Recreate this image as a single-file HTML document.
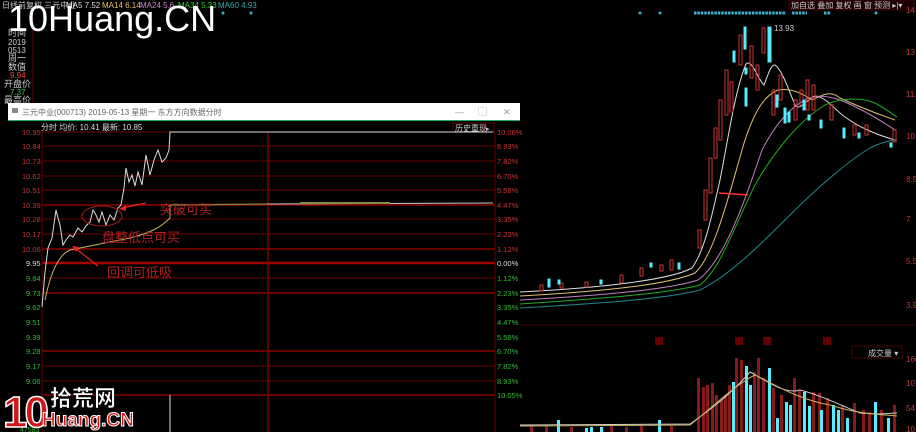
<!DOCTYPE html>
<html><head><meta charset="utf-8">
<style>
html,body{margin:0;padding:0;background:#000;width:916px;height:432px;overflow:hidden;font-family:"Liberation Sans","Noto Sans CJK SC",sans-serif;}
svg{position:absolute;left:0;top:0}
text{font-family:"Liberation Sans","Noto Sans CJK SC",sans-serif}
</style></head><body>
<svg width="916" height="432" viewBox="0 0 916 432">
<!-- top legend -->
<text x="2" y="8" font-size="8" fill="#ccc">日线前复权 三元中业</text>
<text x="66" y="8" font-size="8" fill="#ddd">MA5 7.52</text>
<text x="102" y="8" font-size="8" fill="#e6c060">MA14 6.14</text>
<text x="140" y="8" font-size="8" fill="#d080d0">MA24 5.6</text>
<text x="178" y="8" font-size="8" fill="#3c3">MA34 5.33</text>
<text x="218" y="8" font-size="8" fill="#3aa">MA60 4.93</text>
<g fill="#3ab0d0">
<circle cx="223" cy="13" r="1.5"/><circle cx="251" cy="13" r="1.5"/><circle cx="640" cy="13" r="1.5"/><circle cx="660" cy="13" r="1.5"/>
<circle cx="876" cy="13" r="1.5"/>
</g>
<line x1="694" y1="13" x2="786" y2="13" stroke="#3ab0d0" stroke-width="3" stroke-dasharray="2.5 0.9"/>
<line x1="792" y1="13" x2="807" y2="13" stroke="#3ab0d0" stroke-width="3" stroke-dasharray="2.5 0.9"/>
<line x1="824" y1="13" x2="831" y2="13" stroke="#3ab0d0" stroke-width="3" stroke-dasharray="2.5 0.9"/>
<!-- toolbar -->
<rect x="789" y="0" width="125" height="10" fill="#1a0000" stroke="#600" stroke-width="0.6"/>
<text x="791" y="8" font-size="8" fill="#ccc">加自选 叠加 复权 画 窗 预测 ▸|▾</text>
<!-- left panel -->
<line x1="33" y1="18" x2="33" y2="432" stroke="#600" stroke-width="1"/>
<text x="8" y="36" font-size="9" fill="#ccc">时间</text>
<text x="8" y="45" font-size="8" fill="#ccc">2019</text>
<text x="8" y="53" font-size="8" fill="#ccc">0513</text>
<text x="8" y="61" font-size="9" fill="#ccc">周一</text>
<text x="8" y="70" font-size="9" fill="#ccc">数值</text>
<text x="10" y="78" font-size="8" fill="#f44">9.94</text>
<text x="4" y="87" font-size="9" fill="#ccc">开盘价</text>
<text x="10" y="95" font-size="8" fill="#4c4">7.37</text>
<text x="4" y="103" font-size="9" fill="#ccc">最高价</text>
<!-- K-line right: MA lines -->
<g stroke-width="1" fill="none">
<path d="M520,292 C600,288 670,280 692,268 C705,250 712,215 720,180 C728,140 735,90 746,64 C752,58 758,80 764,85 C768,75 771,64 775,65 C782,70 788,88 795,105 C800,112 808,98 815,96 C825,96 835,110 845,117 C860,128 880,136 895,140" stroke="#ddd"/>
<path d="M520,296 C610,291 670,284 695,273 C715,255 730,190 745,140 C755,110 765,95 778,90 C790,88 800,92 812,100 C822,95 830,90 840,98 C855,105 875,113 895,120" stroke="#e0c070"/>
<path d="M520,300 C610,295 670,289 698,280 C725,260 745,200 762,150 C775,125 790,108 805,100 C815,95 825,95 840,100 C860,108 880,120 895,130" stroke="#c080c0"/>
<path d="M520,304 C610,298 670,293 700,285 C720,270 735,225 755,185 C775,150 800,120 825,105 C840,98 860,97 875,103 C885,108 893,115 897,117" stroke="#2a2"/>
<path d="M520,308 C610,303 670,298 700,290 C730,275 760,245 790,215 C820,185 850,160 870,148 C882,142 892,140 897,140" stroke="#288"/>
</g>
<g stroke-width="1">
<g stroke="#c33" fill="none">
<rect x="540" y="285" width="3" height="6"/><rect x="560" y="283" width="3" height="5"/><rect x="585" y="282" width="3" height="5"/><rect x="620" y="275" width="3" height="8"/><rect x="640" y="268" width="3" height="8"/><rect x="660" y="265" width="3" height="6"/><rect x="670" y="260" width="3" height="10"/>
<rect x="698" y="230" width="3" height="18"/><rect x="704" y="190" width="3" height="30"/><rect x="709" y="158" width="3" height="35"/><rect x="714" y="128" width="3" height="30"/><rect x="719" y="100" width="3" height="40"/><rect x="725" y="70" width="3" height="45"/><rect x="730" y="82" width="3" height="30"/>
<rect x="739" y="35" width="3" height="30"/><rect x="750" y="46" width="3" height="32"/><rect x="756" y="65" width="3" height="25"/><rect x="762" y="28" width="3" height="25"/><rect x="772" y="90" width="3" height="25"/><rect x="779" y="75" width="3" height="25"/>
<rect x="794" y="100" width="3" height="20"/><rect x="800" y="90" width="3" height="15"/><rect x="806" y="80" width="3" height="30"/><rect x="812" y="85" width="3" height="25"/><rect x="830" y="105" width="3" height="15"/><rect x="853" y="125" width="3" height="10"/><rect x="865" y="125" width="3" height="10"/><rect x="893" y="130" width="3" height="12"/>
</g>
<g fill="#5ef" stroke="#5ef">
<rect x="548" y="279" width="2" height="8"/><rect x="558" y="280" width="2" height="4"/><rect x="600" y="280" width="2" height="4"/><rect x="650" y="263" width="2" height="4"/><rect x="678" y="263" width="2" height="6"/>
<rect x="733" y="51" width="2" height="11"/><rect x="744" y="27" width="2" height="22"/><rect x="768" y="27" width="3" height="35"/><rect x="745" y="88" width="2" height="18"/><rect x="745" y="68" width="2" height="6"/>
<rect x="776" y="95" width="2" height="12"/><rect x="784" y="108" width="2" height="15"/><rect x="788" y="112" width="2" height="10"/><rect x="803" y="100" width="2" height="10"/><rect x="808" y="115" width="2" height="5"/><rect x="820" y="120" width="2" height="8"/><rect x="843" y="128" width="2" height="10"/><rect x="858" y="133" width="2" height="5"/><rect x="890" y="143" width="2" height="4"/>
</g>
</g>
<text x="774" y="31" font-size="8" fill="#ccc">13.93</text>
<line x1="719" y1="193" x2="748" y2="195" stroke="#f33" stroke-width="1.5"/>
<!-- right axis -->
<g font-size="8" fill="#c33">
<text x="906" y="13">14</text><text x="906" y="55">13</text><text x="906" y="97">11.5</text><text x="906" y="139">10</text><text x="906" y="182">8.5</text><text x="906" y="222">7</text><text x="906" y="264">5.5</text><text x="906" y="308">3.9</text>
<text x="906" y="362">160</text><text x="906" y="386">107</text><text x="906" y="411">54</text><text x="906" y="432">10</text>
</g>
<line x1="520" y1="325" x2="916" y2="325" stroke="#400" stroke-width="1"/>
<g font-size="8" fill="#fff"><rect x="655" y="337" width="8" height="8" fill="#600"/><rect x="735" y="337" width="8" height="8" fill="#600"/><rect x="763" y="337" width="8" height="8" fill="#600"/><rect x="823" y="337" width="8" height="8" fill="#600"/></g>
<rect x="852" y="346" width="50" height="12" fill="none" stroke="#400"/>
<text x="868" y="356" font-size="8" fill="#ccc">成交量 ▾</text>
<!-- volume -->
<g fill="#8a1a1a">
<rect x="697" y="378" width="3" height="54"/><rect x="702" y="387" width="3" height="45"/><rect x="706" y="385" width="3" height="47"/><rect x="711" y="383" width="3" height="49"/><rect x="715" y="395" width="3" height="37"/><rect x="720" y="400" width="3" height="32"/><rect x="724" y="395" width="3" height="37"/><rect x="728" y="385" width="3" height="47"/>
<rect x="735" y="358" width="3" height="74"/><rect x="740" y="360" width="3" height="72"/><rect x="753" y="372" width="3" height="60"/><rect x="757" y="358" width="3" height="74"/><rect x="762" y="378" width="3" height="54"/><rect x="772" y="388" width="3" height="44"/><rect x="780" y="395" width="3" height="37"/>
<rect x="793" y="378" width="3" height="54"/><rect x="798" y="390" width="3" height="42"/><rect x="812" y="392" width="3" height="40"/><rect x="818" y="393" width="3" height="39"/><rect x="826" y="398" width="3" height="34"/><rect x="841" y="405" width="3" height="27"/><rect x="853" y="403" width="3" height="29"/><rect x="862" y="410" width="3" height="22"/><rect x="868" y="412" width="3" height="20"/><rect x="880" y="410" width="3" height="22"/><rect x="893" y="405" width="3" height="27"/>
<rect x="530" y="426" width="3" height="6"/><rect x="545" y="426" width="3" height="6"/><rect x="570" y="427" width="3" height="5"/><rect x="610" y="426" width="3" height="6"/><rect x="625" y="427" width="3" height="5"/><rect x="640" y="426" width="3" height="6"/><rect x="670" y="426" width="3" height="6"/>
</g>
<g fill="#5ef">
<rect x="732" y="382" width="3" height="50"/><rect x="745" y="366" width="3" height="66"/><rect x="749" y="385" width="3" height="47"/><rect x="768" y="368" width="3" height="64"/><rect x="776" y="418" width="3" height="14"/><rect x="785" y="402" width="3" height="30"/><rect x="789" y="405" width="3" height="27"/><rect x="803" y="392" width="3" height="40"/><rect x="808" y="406" width="3" height="26"/><rect x="820" y="410" width="3" height="22"/><rect x="832" y="405" width="3" height="27"/><rect x="837" y="410" width="3" height="22"/><rect x="846" y="418" width="3" height="14"/><rect x="874" y="402" width="3" height="30"/><rect x="887" y="418" width="3" height="14"/><rect x="557" y="420" width="3" height="12"/><rect x="658" y="420" width="3" height="12"/><rect x="590" y="427" width="3" height="5"/><rect x="585" y="428" width="3" height="4"/><rect x="600" y="427" width="3" height="5"/>
</g>
<path d="M520,425 L690,424 C710,410 730,395 750,372 C765,380 785,395 800,390 C820,395 840,405 860,413 C880,415 890,413 897,413" fill="none" stroke="#ccc" stroke-width="1"/>
<path d="M520,426 L690,425 C715,405 735,385 755,375 C775,385 800,400 830,405 C860,415 890,415 897,416" fill="none" stroke="#c9b060" stroke-width="1"/>

<!-- popup window -->
<rect x="8" y="103" width="512" height="329" fill="#000"/>
<rect x="8" y="103" width="512" height="17" fill="#fff"/>
<rect x="12" y="108" width="6" height="5" fill="#888"/>
<text x="22" y="115" font-size="8" fill="#666">三元中业(000713) 2019-05-13 星期一      东方方向数据分时</text>
<text x="455" y="115" font-size="9" fill="#999">—</text><text x="478" y="115" font-size="9" fill="#999">▢</text><text x="503" y="115" font-size="9" fill="#999">✕</text>
<rect x="8" y="120" width="512" height="1" fill="#2a6"/>
<text x="41" y="130" font-size="8" fill="#ddd">分时 均价: 10.41 最新: 10.85</text>
<rect x="453" y="123" width="30" height="9" fill="none" stroke="#600"/>
<text x="455" y="131" font-size="8" fill="#ccc">历史重现</text>
<rect x="485" y="123" width="9" height="9" fill="none" stroke="#600"/><text x="486" y="131" font-size="7" fill="#ccc">▸</text>
<!-- grid -->
<g stroke="#6a0000" stroke-width="1">
<line x1="42" y1="132" x2="495" y2="132"/><line x1="42" y1="146" x2="495" y2="146"/><line x1="42" y1="161" x2="495" y2="161"/><line x1="42" y1="176" x2="495" y2="176"/><line x1="42" y1="190" x2="495" y2="190"/><line x1="42" y1="219" x2="495" y2="219"/><line x1="42" y1="234" x2="495" y2="234"/><line x1="42" y1="278" x2="495" y2="278"/><line x1="42" y1="366" x2="495" y2="366"/><line x1="42" y1="381" x2="495" y2="381"/>
</g>
<g stroke="#8a0000" stroke-width="1.6">
<line x1="42" y1="205" x2="495" y2="205"/><line x1="42" y1="249" x2="495" y2="249"/><line x1="42" y1="293" x2="495" y2="293"/><line x1="42" y1="351" x2="495" y2="351"/><line x1="42" y1="395" x2="495" y2="395"/>
</g>
<line x1="42" y1="263" x2="495" y2="263" stroke="#a00000" stroke-width="2.5"/>
<line x1="268" y1="132" x2="268" y2="432" stroke="#7a0000" stroke-width="1.5"/>
<line x1="42" y1="132" x2="42" y2="432" stroke="#600"/>
<line x1="495" y1="132" x2="495" y2="432" stroke="#600"/>
<g font-size="7.5" fill="#c33">
<text x="22" y="135">10.95</text><text x="22" y="149">10.84</text><text x="22" y="164">10.73</text><text x="22" y="179">10.62</text><text x="22" y="193">10.51</text><text x="22" y="208">10.39</text><text x="22" y="222">10.28</text><text x="22" y="237">10.17</text><text x="22" y="252">10.06</text>
<text x="497" y="135">10.06%</text><text x="497" y="149">8.93%</text><text x="497" y="164">7.82%</text><text x="497" y="179">6.70%</text><text x="497" y="193">5.58%</text><text x="497" y="208">4.47%</text><text x="497" y="222">3.35%</text><text x="497" y="237">2.23%</text><text x="497" y="252">1.12%</text>
</g>
<text x="26" y="266" font-size="7.5" fill="#ddd">9.95</text><text x="497" y="266" font-size="7.5" fill="#ddd">0.00%</text>
<g font-size="7.5" fill="#3b3">
<text x="26" y="281">9.84</text><text x="26" y="296">9.73</text><text x="26" y="310">9.62</text><text x="26" y="325">9.51</text><text x="26" y="340">9.39</text><text x="26" y="354">9.28</text><text x="26" y="369">9.17</text><text x="26" y="384">9.06</text>
<text x="497" y="281">1.12%</text><text x="497" y="296">2.23%</text><text x="497" y="310">3.35%</text><text x="497" y="325">4.47%</text><text x="497" y="340">5.58%</text><text x="497" y="354">6.70%</text><text x="497" y="369">7.82%</text><text x="497" y="384">8.93%</text><text x="497" y="398">10.05%</text>
</g>
<!-- price line -->
<polyline fill="none" stroke="#ddd" stroke-width="1" points="42,307 45,272 48,248 52,238 56,210 58,218 60,225 63,245 66,240 70,235 73,237 78,228 82,232 86,226 90,222 93,210 96,215 99,222 102,212 106,225 110,215 114,220 118,208 121,205 124,188 126,168 129,182 132,175 135,186 138,172 142,185 146,155 150,175 154,160 158,150 162,162 166,158 169,150 170,132 493,132"/>
<path d="M45,300 C50,275 58,255 70,250 C90,246 110,242 130,238 C150,233 160,228 170,218 L170,205" fill="none" stroke="#c9b060" stroke-width="1"/>
<line x1="170" y1="205" x2="268" y2="204" stroke="#8a8a40" stroke-width="1.2"/>
<line x1="268" y1="204" x2="493" y2="203" stroke="#ccc" stroke-width="1"/>
<line x1="300" y1="203" x2="390" y2="203" stroke="#8a8a40" stroke-width="2"/>
<line x1="170" y1="395" x2="170" y2="432" stroke="#ddd"/>
<!-- annotations -->
<ellipse cx="102" cy="216" rx="20" ry="10" fill="none" stroke="#a02020" stroke-width="1"/>
<line x1="146" y1="203" x2="122" y2="208" stroke="#e22" stroke-width="1.2"/><polygon points="119,209 126,205 126,211" fill="#e22"/>
<line x1="98" y1="266" x2="75" y2="248" stroke="#e22" stroke-width="1.2"/><polygon points="72,246 79,247 76,252" fill="#e22"/>
<text x="160" y="214" font-size="13" fill="#b02020">突破可买</text>
<text x="102" y="242" font-size="13" fill="#b02020">盘整低点可买</text>
<text x="107" y="277" font-size="13" fill="#b02020">回调可低吸</text>
<text x="20" y="432" font-size="7" fill="#3b3">47583</text>
<!-- watermarks -->
<text x="8" y="31" font-size="36" fill="#fff">10Huang.CN</text>
<text x="3" y="427" font-size="44" fill="#d01818" font-weight="bold" stroke="#fff" stroke-width="1.5" letter-spacing="-3">10</text>
<text x="50" y="406" font-size="22" fill="#fff" font-weight="bold" stroke="#000" stroke-width="0.5">拾荒网</text>
<text x="42" y="426" font-size="19" fill="#d01818" font-weight="bold" stroke="#fff" stroke-width="1">Huang.CN</text>
</svg>
</body></html>
